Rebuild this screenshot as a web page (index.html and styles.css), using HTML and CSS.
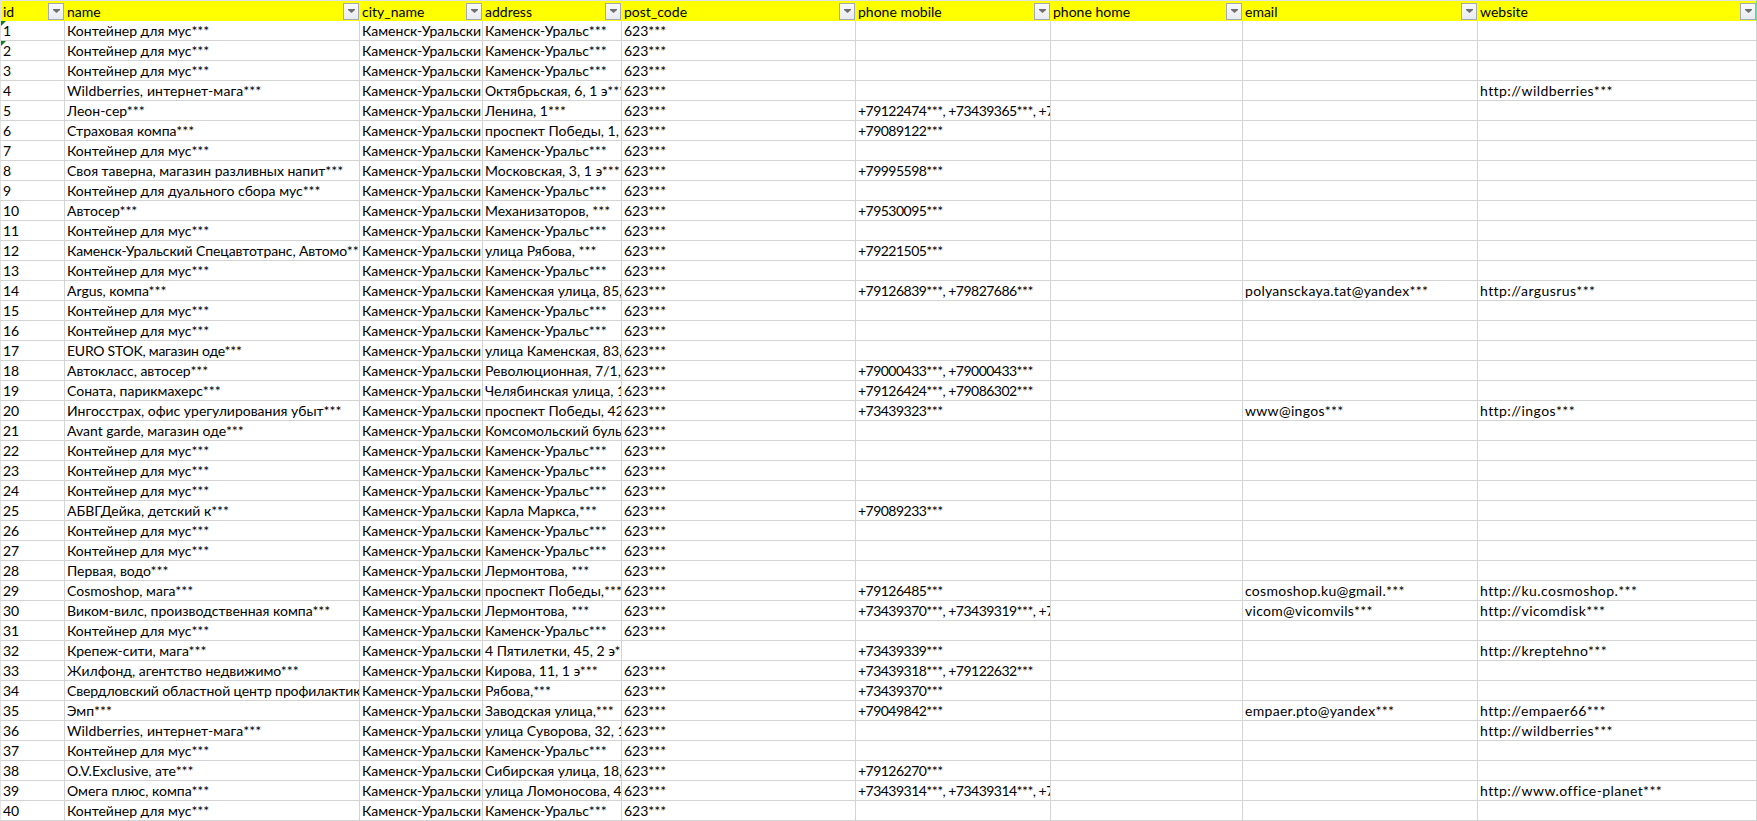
FILE: index.html
```html
<!DOCTYPE html>
<html lang="ru">
<head>
<meta charset="utf-8">
<title>Лист</title>
<link rel="stylesheet" href="styles.css">
</head>
<body>
<table class="sheet">
<colgroup><col class="c-id"><col class="c-name"><col class="c-city"><col class="c-addr"><col class="c-post"><col class="c-mob"><col class="c-home"><col class="c-email"><col class="c-web"></colgroup>
<thead><tr>
<th><div class="hd"><span>id</span><span class="fb"><svg viewBox="0 0 7 4" width="7" height="4"><path d="M0 0h7v1L3.5 4 0 1z"/></svg></span></div></th>
<th><div class="hd"><span>name</span><span class="fb"><svg viewBox="0 0 7 4" width="7" height="4"><path d="M0 0h7v1L3.5 4 0 1z"/></svg></span></div></th>
<th><div class="hd"><span>city_name</span><span class="fb"><svg viewBox="0 0 7 4" width="7" height="4"><path d="M0 0h7v1L3.5 4 0 1z"/></svg></span></div></th>
<th><div class="hd"><span>address</span><span class="fb"><svg viewBox="0 0 7 4" width="7" height="4"><path d="M0 0h7v1L3.5 4 0 1z"/></svg></span></div></th>
<th><div class="hd"><span>post_code</span><span class="fb"><svg viewBox="0 0 7 4" width="7" height="4"><path d="M0 0h7v1L3.5 4 0 1z"/></svg></span></div></th>
<th><div class="hd"><span>phone mobile</span><span class="fb"><svg viewBox="0 0 7 4" width="7" height="4"><path d="M0 0h7v1L3.5 4 0 1z"/></svg></span></div></th>
<th><div class="hd"><span>phone home</span><span class="fb"><svg viewBox="0 0 7 4" width="7" height="4"><path d="M0 0h7v1L3.5 4 0 1z"/></svg></span></div></th>
<th><div class="hd"><span>email</span><span class="fb"><svg viewBox="0 0 7 4" width="7" height="4"><path d="M0 0h7v1L3.5 4 0 1z"/></svg></span></div></th>
<th class="last"><div class="hd"><span>website</span><span class="fb"><svg viewBox="0 0 7 4" width="7" height="4"><path d="M0 0h7v1L3.5 4 0 1z"/></svg></span></div></th>
</tr></thead>
<tbody>
<tr><td class="flag">1</td><td>Контейнер для мус***</td><td>Каменск-Уральский</td><td>Каменск-Уральс***</td><td>623***</td><td></td><td></td><td></td><td></td></tr>
<tr><td class="flag">2</td><td>Контейнер для мус***</td><td>Каменск-Уральский</td><td>Каменск-Уральс***</td><td>623***</td><td></td><td></td><td></td><td></td></tr>
<tr><td>3</td><td>Контейнер для мус***</td><td>Каменск-Уральский</td><td>Каменск-Уральс***</td><td>623***</td><td></td><td></td><td></td><td></td></tr>
<tr><td>4</td><td class="loose">Wildberries, интернет-мага***</td><td>Каменск-Уральский</td><td>Октябрьская, 6, 1 э***</td><td>623***</td><td></td><td></td><td></td><td>http://wildberries***</td></tr>
<tr><td>5</td><td>Леон-сер***</td><td>Каменск-Уральский</td><td>Ленина, 1***</td><td>623***</td><td>+79122474***, +73439365***, +79***</td><td></td><td></td><td></td></tr>
<tr><td>6</td><td>Страховая компа***</td><td>Каменск-Уральский</td><td>проспект Победы, 1, 3***</td><td>623***</td><td>+79089122***</td><td></td><td></td><td></td></tr>
<tr><td>7</td><td>Контейнер для мус***</td><td>Каменск-Уральский</td><td>Каменск-Уральс***</td><td>623***</td><td></td><td></td><td></td><td></td></tr>
<tr><td>8</td><td>Своя таверна, магазин разливных напит***</td><td>Каменск-Уральский</td><td>Московская, 3, 1 э***</td><td>623***</td><td>+79995598***</td><td></td><td></td><td></td></tr>
<tr><td>9</td><td>Контейнер для дуального сбора мус***</td><td>Каменск-Уральский</td><td>Каменск-Уральс***</td><td>623***</td><td></td><td></td><td></td><td></td></tr>
<tr><td>10</td><td>Автосер***</td><td>Каменск-Уральский</td><td>Механизаторов, ***</td><td>623***</td><td>+79530095***</td><td></td><td></td><td></td></tr>
<tr><td>11</td><td>Контейнер для мус***</td><td>Каменск-Уральский</td><td>Каменск-Уральс***</td><td>623***</td><td></td><td></td><td></td><td></td></tr>
<tr><td>12</td><td class="snug">Каменск-Уральский Спецавтотранс, Автомо***</td><td>Каменск-Уральский</td><td>улица Рябова, ***</td><td>623***</td><td>+79221505***</td><td></td><td></td><td></td></tr>
<tr><td>13</td><td>Контейнер для мус***</td><td>Каменск-Уральский</td><td>Каменск-Уральс***</td><td>623***</td><td></td><td></td><td></td><td></td></tr>
<tr><td>14</td><td>Argus, компа***</td><td>Каменск-Уральский</td><td>Каменская улица, 85, 1***</td><td>623***</td><td>+79126839***, +79827686***</td><td></td><td>polyansckaya.tat@yandex***</td><td>http://argusrus***</td></tr>
<tr><td>15</td><td>Контейнер для мус***</td><td>Каменск-Уральский</td><td>Каменск-Уральс***</td><td>623***</td><td></td><td></td><td></td><td></td></tr>
<tr><td>16</td><td>Контейнер для мус***</td><td>Каменск-Уральский</td><td>Каменск-Уральс***</td><td>623***</td><td></td><td></td><td></td><td></td></tr>
<tr><td>17</td><td class="tight">EURO STOK, магазин оде***</td><td>Каменск-Уральский</td><td>улица Каменская, 83, 1***</td><td>623***</td><td></td><td></td><td></td><td></td></tr>
<tr><td>18</td><td>Автокласс, автосер***</td><td>Каменск-Уральский</td><td>Революционная, 7/1, 1***</td><td>623***</td><td>+79000433***, +79000433***</td><td></td><td></td><td></td></tr>
<tr><td>19</td><td>Соната, парикмахерс***</td><td>Каменск-Уральский</td><td>Челябинская улица, 1***</td><td>623***</td><td>+79126424***, +79086302***</td><td></td><td></td><td></td></tr>
<tr><td>20</td><td>Ингосстрах, офис урегулирования убыт***</td><td>Каменск-Уральский</td><td>проспект Победы, 42***</td><td>623***</td><td>+73439323***</td><td></td><td>www@ingos***</td><td>http://ingos***</td></tr>
<tr><td>21</td><td>Avant garde, магазин оде***</td><td>Каменск-Уральский</td><td>Комсомольский бульвар***</td><td>623***</td><td></td><td></td><td></td><td></td></tr>
<tr><td>22</td><td>Контейнер для мус***</td><td>Каменск-Уральский</td><td>Каменск-Уральс***</td><td>623***</td><td></td><td></td><td></td><td></td></tr>
<tr><td>23</td><td>Контейнер для мус***</td><td>Каменск-Уральский</td><td>Каменск-Уральс***</td><td>623***</td><td></td><td></td><td></td><td></td></tr>
<tr><td>24</td><td>Контейнер для мус***</td><td>Каменск-Уральский</td><td>Каменск-Уральс***</td><td>623***</td><td></td><td></td><td></td><td></td></tr>
<tr><td>25</td><td>АБВГДейка, детский к***</td><td>Каменск-Уральский</td><td>Карла Маркса,***</td><td>623***</td><td>+79089233***</td><td></td><td></td><td></td></tr>
<tr><td>26</td><td>Контейнер для мус***</td><td>Каменск-Уральский</td><td>Каменск-Уральс***</td><td>623***</td><td></td><td></td><td></td><td></td></tr>
<tr><td>27</td><td>Контейнер для мус***</td><td>Каменск-Уральский</td><td>Каменск-Уральс***</td><td>623***</td><td></td><td></td><td></td><td></td></tr>
<tr><td>28</td><td>Первая, водо***</td><td>Каменск-Уральский</td><td>Лермонтова, ***</td><td>623***</td><td></td><td></td><td></td><td></td></tr>
<tr><td>29</td><td>Cosmoshop, мага***</td><td>Каменск-Уральский</td><td>проспект Победы,***</td><td>623***</td><td>+79126485***</td><td></td><td>cosmoshop.ku@gmail.***</td><td>http://ku.cosmoshop.***</td></tr>
<tr><td>30</td><td>Виком-вилс, производственная компа***</td><td>Каменск-Уральский</td><td>Лермонтова, ***</td><td>623***</td><td>+73439370***, +73439319***, +79***</td><td></td><td>vicom@vicomvils***</td><td>http://vicomdisk***</td></tr>
<tr><td>31</td><td>Контейнер для мус***</td><td>Каменск-Уральский</td><td>Каменск-Уральс***</td><td>623***</td><td></td><td></td><td></td><td></td></tr>
<tr><td>32</td><td>Крепеж-сити, мага***</td><td>Каменск-Уральский</td><td>4 Пятилетки, 45, 2 э***</td><td></td><td>+73439339***</td><td></td><td></td><td>http://kreptehno***</td></tr>
<tr><td>33</td><td>Жилфонд, агентство недвижимо***</td><td>Каменск-Уральский</td><td>Кирова, 11, 1 э***</td><td>623***</td><td>+73439318***, +79122632***</td><td></td><td></td><td></td></tr>
<tr><td>34</td><td class="snug">Свердловский областной центр профилактики***</td><td>Каменск-Уральский</td><td>Рябова,***</td><td>623***</td><td>+73439370***</td><td></td><td></td><td></td></tr>
<tr><td>35</td><td>Эмп***</td><td>Каменск-Уральский</td><td>Заводская улица,***</td><td>623***</td><td>+79049842***</td><td></td><td>empaer.pto@yandex***</td><td>http://empaer66***</td></tr>
<tr><td>36</td><td class="loose">Wildberries, интернет-мага***</td><td>Каменск-Уральский</td><td>улица Суворова, 32, 1***</td><td>623***</td><td></td><td></td><td></td><td>http://wildberries***</td></tr>
<tr><td>37</td><td>Контейнер для мус***</td><td>Каменск-Уральский</td><td>Каменск-Уральс***</td><td>623***</td><td></td><td></td><td></td><td></td></tr>
<tr><td>38</td><td>O.V.Exclusive, ате***</td><td>Каменск-Уральский</td><td>Сибирская улица, 18, 1***</td><td>623***</td><td>+79126270***</td><td></td><td></td><td></td></tr>
<tr><td>39</td><td>Омега плюс, компа***</td><td>Каменск-Уральский</td><td>улица Ломоносова, 43***</td><td>623***</td><td>+73439314***, +73439314***, +79***</td><td></td><td></td><td>http://www.office-planet***</td></tr>
<tr><td>40</td><td>Контейнер для мус***</td><td>Каменск-Уральский</td><td>Каменск-Уральс***</td><td>623***</td><td></td><td></td><td></td><td></td></tr>
</tbody>
</table>
</body>
</html>
```
FILE: styles.css
```css
html, body {
  margin: 0;
  padding: 0;
  background: #fff;
  overflow: hidden;
}
.sheet {
  table-layout: fixed;
  width: 1757px;
  border-collapse: separate;
  border-spacing: 0;
  font-family: Lato, "Open Sans", sans-serif;
  font-size: 14px;
  color: #000;
}
.c-id { width: 65px; }
.c-name { width: 295px; }
.c-city { width: 123px; }
.c-addr { width: 139px; }
.c-post { width: 234px; }
.c-mob { width: 195px; }
.c-home { width: 192px; }
.c-email { width: 235px; }
.c-web { width: 279px; }
th {
  box-sizing: border-box;
  height: 21px;
  padding: 0;
  background: #ff0;
  border-top: 1px solid #e2e2e2;
  font-weight: 400;
  text-align: left;
}
th:first-child { border-left: 1px solid #e2e2e2; }
th.last { border-right: 1px solid #5fe3a1; }
.hd {
  display: flex;
  align-items: center;
  justify-content: space-between;
  height: 20px;
  padding: 0 1px 0 2px;
}
th.last .hd { padding-right: 0; }
.fb {
  box-sizing: border-box;
  display: flex;
  align-items: center;
  justify-content: center;
  flex: none;
  width: 16px;
  height: 17px;
  background: linear-gradient(#f8f9fb, #e8ebf0);
  border: 1px solid #a3a9bb;
}
.fb svg { fill: #6f6f6f; display: block; }
td {
  box-sizing: border-box;
  height: 20px;
  padding: 0 2px;
  border-right: 1px solid #d4d4d4;
  border-bottom: 1px solid #d4d4d4;
  line-height: 19px;
  white-space: nowrap;
  overflow: hidden;
}
td:first-child {
  border-left: 1px solid #e2e2e2;
}
td:nth-child(6) { letter-spacing: -0.53px; }
td:nth-child(8) { letter-spacing: 0.3px; }
td:nth-child(9) { letter-spacing: 0.42px; }
.loose { letter-spacing: 0.15px; }
.snug { letter-spacing: -0.1px; }
.tight { letter-spacing: -0.25px; }
.flag { position: relative; }
.flag::before {
  content: "";
  position: absolute;
  left: 0;
  top: 0;
  border-top: 5px solid #0a7d1e;
  border-right: 5px solid transparent;
}
```
